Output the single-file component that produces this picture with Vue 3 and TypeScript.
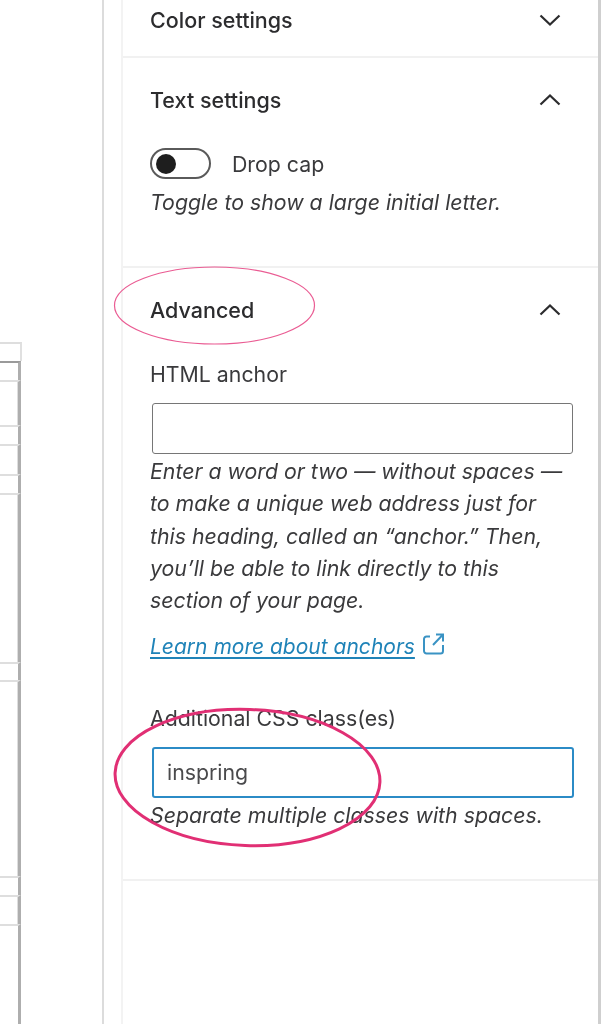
<script setup lang="ts">
const cells = [
  { height: 19, kind: 'top' },
  { height: 19, kind: 'plain' },
  { height: 45, kind: 'inset' },
  { height: 19, kind: 'plain' },
  { height: 30, kind: 'inset' },
  { height: 19, kind: 'plain' },
  { height: 169, kind: 'inset' },
  { height: 18, kind: 'plain' },
  { height: 196, kind: 'inset' },
  { height: 19, kind: 'plain' },
  { height: 29, kind: 'inset' },
]
</script>

<template>
  <div class="page">
    <div class="canvas">
      <div class="table">
        <div
          v-for="(cell, i) in cells"
          :key="i"
          class="cell"
          :class="cell.kind"
          :style="{ height: cell.height + 'px' }"
        ></div>
        <div class="table-rest"></div>
      </div>
    </div>
    <div class="sidebar">
      <section class="panel first">
        <header class="head">
          <h2>Color settings</h2>
          <svg class="chev" viewBox="0 0 24 14" width="24" height="14"><path d="M2.500 2.500 12 11.500l9.500-9" /></svg>
        </header>
      </section>

      <section class="panel second">
        <header class="head">
          <h2>Text settings</h2>
          <svg class="chev" viewBox="0 0 24 14" width="24" height="14"><path d="M2.500 11.500 12 2.500l9.500 9" /></svg>
        </header>
        <div class="toggle-row">
          <span class="toggle"><span class="knob"></span></span>
          <span class="toggle-label">Drop cap</span>
        </div>
        <p class="help toggle-help">Toggle to show a large initial letter.</p>
      </section>

      <section class="panel third">
        <header class="head">
          <h2>Advanced</h2>
          <svg class="chev" viewBox="0 0 24 14" width="24" height="14"><path d="M2.500 11.500 12 2.500l9.500 9" /></svg>
        </header>
        <label class="label anchor-label">HTML anchor</label>
        <div class="field"></div>
        <p class="help anchor-help">
          Enter a word or two — without spaces —<br />
          to make a unique web address just for<br />
          this heading, called an “anchor.” Then,<br />
          you’ll be able to link directly to this<br />
          section of your page.
        </p>
        <div class="link-row">
          <a class="link">Learn more about anchors</a>
          <svg class="ext" viewBox="0 0 24 24" width="24" height="24">
            <path d="M9 4.500H5.500a2.500 2.500 0 0 0-2.500 2.500v12a2.500 2.500 0 0 0 2.500 2.500h14a2.500 2.500 0 0 0 2.500-2.500v-6" />
            <path d="M12 13 22 2.500M15 2.500h7V9.500" />
          </svg>
        </div>
        <label class="label css-label">Additional CSS class(es)</label>
        <div class="field focused">inspring</div>
        <p class="help">Separate multiple classes with spaces.</p>
      </section>
    </div>

    <svg class="marks" viewBox="0 0 603 1024" width="603" height="1024">
      <ellipse class="mark-thin" cx="214.500" cy="305.500" rx="100" ry="38.500" />
      <ellipse class="mark-bold" cx="247.500" cy="777.500" rx="132.500" ry="68" transform="rotate(2 247.500 777.500)" />
    </svg>
  </div>
</template>

<style>
html,
body {
  margin: 0;
  background: #fff;
}
</style>

<style scoped>
.page {
  position: relative;
  display: flex;
  width: 603px;
  height: 1024px;
  overflow: hidden;
  background: #fff;
  color: #2c2c2e;
  font-family: Inter, "Liberation Sans", sans-serif;
  filter: blur(0.4px);
}
.canvas {
  flex: 0 0 102px;
  height: 100%;
  border-right: 2px solid #dcdcdc;
  box-sizing: content-box;
}
.table {
  display: flex;
  flex-direction: column;
  width: 22px;
  height: 100%;
  padding-top: 342px;
  box-sizing: border-box;
}
.cell {
  box-sizing: border-box;
  flex: none;
  border-top: 2px solid #dedede;
}
.cell.top {
  border-right: 2px solid #e0e0e0;
}
.cell.plain {
  width: 21px;
  border-right: 3px solid #aeaeae;
}
.cell.inset {
  width: 21px;
  border-right: 3px solid #aeaeae;
  box-shadow: inset -1px 0 0 #dedede;
}
.cell.plain:nth-child(2) {
  border-top-color: #9a9a9a;
}
.table-rest {
  flex: 1;
  width: 21px;
  box-sizing: border-box;
  border-top: 2px solid #dedede;
  border-right: 3px solid #aeaeae;
}
.sidebar {
  flex: 0 0 480px;
  margin-left: 17px;
  height: 100%;
  box-sizing: border-box;
  border-left: 2px solid #f3f3f3;
  border-right: 3px solid #cfcfcf;
}
.panel {
  box-sizing: border-box;
  padding: 22px 0 0 27px;
  border-bottom: 2px solid #f1f1f1;
}
.first {
  height: 58px;
  padding-top: 0;
}
.second {
  height: 210px;
}
.third {
  height: 613px;
}
.head {
  display: flex;
  align-items: center;
  justify-content: space-between;
  height: 40px;
  padding-right: 36px;
}
h2 {
  margin: 0;
  font-size: 21.500px;
  font-weight: 500;
  line-height: 40px;
  color: #2c2c2e;
}
.chev {
  flex: none;
  fill: none;
  stroke: #2c2c2e;
  stroke-width: 2.200;
}
.toggle-row {
  display: flex;
  align-items: center;
  gap: 21px;
  height: 31px;
  margin-top: 28px;
}
.toggle {
  display: flex;
  align-items: center;
  box-sizing: border-box;
  width: 61px;
  height: 31px;
  padding-left: 3.500px;
  border: 2px solid #5a5a5a;
  border-radius: 16px;
}
.knob {
  width: 20px;
  height: 20px;
  border-radius: 50%;
  background: #1e1e1e;
}
.toggle-label,
.label {
  font-size: 21.300px;
  line-height: 32px;
  color: #3a3a3c;
}
.label {
  display: block;
}
.help {
  margin: 0;
  font-size: 21.300px;
  font-style: italic;
  line-height: 32.300px;
  color: #3a3a3c;
}
.toggle-help {
  margin-top: 7px;
}
.anchor-label {
  margin-top: 28px;
}
.field {
  box-sizing: border-box;
  width: 421px;
  height: 51px;
  margin: 13px 0 1px 2px;
  border: 1px solid #767676;
  border-radius: 3px;
  font-size: 21.300px;
  line-height: 49px;
}
.field.focused {
  width: 422px;
  padding-left: 13px;
  border: 2px solid #2b8bc6;
  line-height: 47px;
  color: #4a4a4c;
}
.link-row {
  display: flex;
  align-items: center;
  gap: 6px;
  height: 32px;
  margin-top: 15px;
}
.link {
  font-size: 21px;
  font-style: italic;
  line-height: 32px;
  color: #1f83b8;
  text-decoration: underline;
  text-underline-offset: 3px;
}
.ext {
  flex: none;
  margin-top: -6px;
  fill: none;
  stroke: #3a93c4;
  stroke-width: 2;
}
.css-label {
  margin-top: 39px;
}
.marks {
  position: absolute;
  top: 0;
  left: 0;
  pointer-events: none;
}
.mark-thin,
.mark-bold {
  fill: none;
}
.mark-thin {
  stroke: #ea5c93;
  stroke-width: 1.200;
}
.mark-bold {
  stroke: #e12f74;
  stroke-width: 3;
}
</style>
